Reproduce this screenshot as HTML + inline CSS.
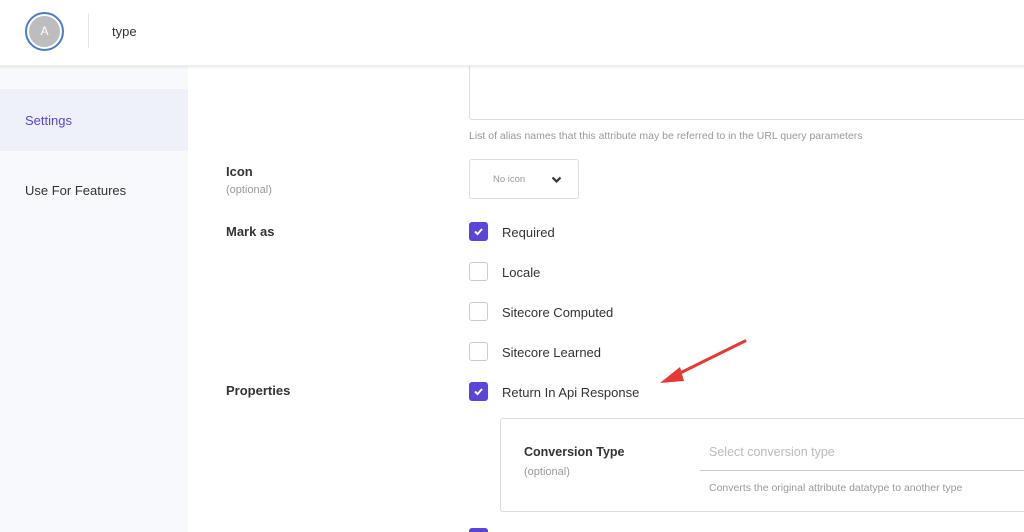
<!DOCTYPE html>
<html><head><style>
*{margin:0;padding:0;box-sizing:border-box}
html,body{width:1024px;height:532px;overflow:hidden}
body{background:#fff;font-family:"Liberation Sans",sans-serif;color:#222;position:relative}
.a{position:absolute;white-space:nowrap}
.cb{position:absolute;width:19px;height:19px;border:1px solid #ccc;border-radius:3px;background:#fff;left:469px}
.cb.on{background:#5b45d6;border-color:#5b45d6}
.lbl{position:absolute;left:502px;font-size:13px;color:#333}
.opt{font-size:11px;color:#999}
</style></head><body>
<div class="a" style="left:0;top:66px;width:188px;height:466px;background:#f8f9fc"></div>
<div class="a" style="left:0;top:89px;width:188px;height:62px;background:#eef1f9"></div>
<div class="a" style="left:25px;top:113px;font-size:13px;color:#5b45d6">Settings</div>
<div class="a" style="left:25px;top:183px;font-size:13px;color:#333">Use For Features</div>

<div class="a" style="left:469px;top:50px;width:570px;height:70px;border:1px solid #ddd;border-radius:3px"></div>
<div class="a" style="left:469px;top:130px;font-size:10.5px;color:#999">List of alias names that this attribute may be referred to in the URL query parameters</div>

<div class="a" style="left:0;top:0;width:1024px;height:66px;background:#fff;box-shadow:0 1px 3px rgba(0,0,0,.1);border-bottom:1px solid #ececec;z-index:5"></div>
<div class="a" style="left:25px;top:12px;width:39px;height:39px;border-radius:50%;border:2px solid #4a7cc9;background:#fff;z-index:6"></div>
<div class="a" style="left:29px;top:16px;width:31px;height:31px;border-radius:50%;background:#bdbdbd;color:#fff;font-size:12px;text-align:center;line-height:31px;z-index:7">A</div>
<div class="a" style="left:88px;top:13px;width:1px;height:35px;background:#e6e6e6;z-index:6"></div>
<div class="a" style="left:112px;top:24px;font-size:13px;color:#333;z-index:6">type</div>

<div class="a" style="left:226px;top:164px;font-size:13px;font-weight:bold;color:#333">Icon</div>
<div class="a opt" style="left:226px;top:184px">(optional)</div>
<div class="a" style="left:469px;top:159px;width:110px;height:40px;border:1px solid #ddd;border-radius:3px"></div>
<div class="a" style="left:493px;top:174px;font-size:9.5px;color:#999">No icon</div>
<svg class="a" style="left:551px;top:176px" width="11" height="8" viewBox="0 0 11 8"><path d="M1.5 1.5L5.5 5.5L9.5 1.5" stroke="#333" stroke-width="2.2" fill="none"/></svg>

<div class="a" style="left:226px;top:224px;font-size:13px;font-weight:bold;color:#333">Mark as</div>
<div class="a" style="left:226px;top:383px;font-size:13px;font-weight:bold;color:#333">Properties</div>

<div class="cb on" style="top:222px"></div><svg class="a" style="left:473px;top:226px" width="11" height="11" viewBox="0 0 11 11"><path d="M2 5.5L4.5 8L9 3" stroke="#fff" stroke-width="2" fill="none"/></svg>
<div class="lbl" style="top:225px">Required</div>
<div class="cb" style="top:262px"></div><div class="lbl" style="top:265px">Locale</div>
<div class="cb" style="top:302px"></div><div class="lbl" style="top:305px">Sitecore Computed</div>
<div class="cb" style="top:342px"></div><div class="lbl" style="top:345px">Sitecore Learned</div>
<div class="cb on" style="top:382px"></div><svg class="a" style="left:473px;top:386px" width="11" height="11" viewBox="0 0 11 11"><path d="M2 5.5L4.5 8L9 3" stroke="#fff" stroke-width="2" fill="none"/></svg>
<div class="lbl" style="top:385px">Return In Api Response</div>
<div class="cb on" style="top:528px"></div>

<svg class="a" style="left:650px;top:335px" width="105" height="55" viewBox="0 0 105 55"><path d="M95 6L22 42" stroke="#e53935" stroke-width="3" fill="none" stroke-linecap="round"/><path d="M10 48L30 32L34 46Z" fill="#e53935"/></svg>

<div class="a" style="left:500px;top:418px;width:540px;height:94px;border:1px solid #ddd;border-radius:3px"></div>
<div class="a" style="left:524px;top:445px;font-size:12.5px;font-weight:bold;color:#333">Conversion Type</div>
<div class="a opt" style="left:524px;top:466px">(optional)</div>
<div class="a" style="left:709px;top:445px;font-size:12.5px;color:#bbb">Select conversion type</div>
<div class="a" style="left:700px;top:470px;width:340px;height:1px;background:#ccc"></div>
<div class="a" style="left:709px;top:482px;font-size:10.5px;color:#999">Converts the original attribute datatype to another type</div>
</body></html>
